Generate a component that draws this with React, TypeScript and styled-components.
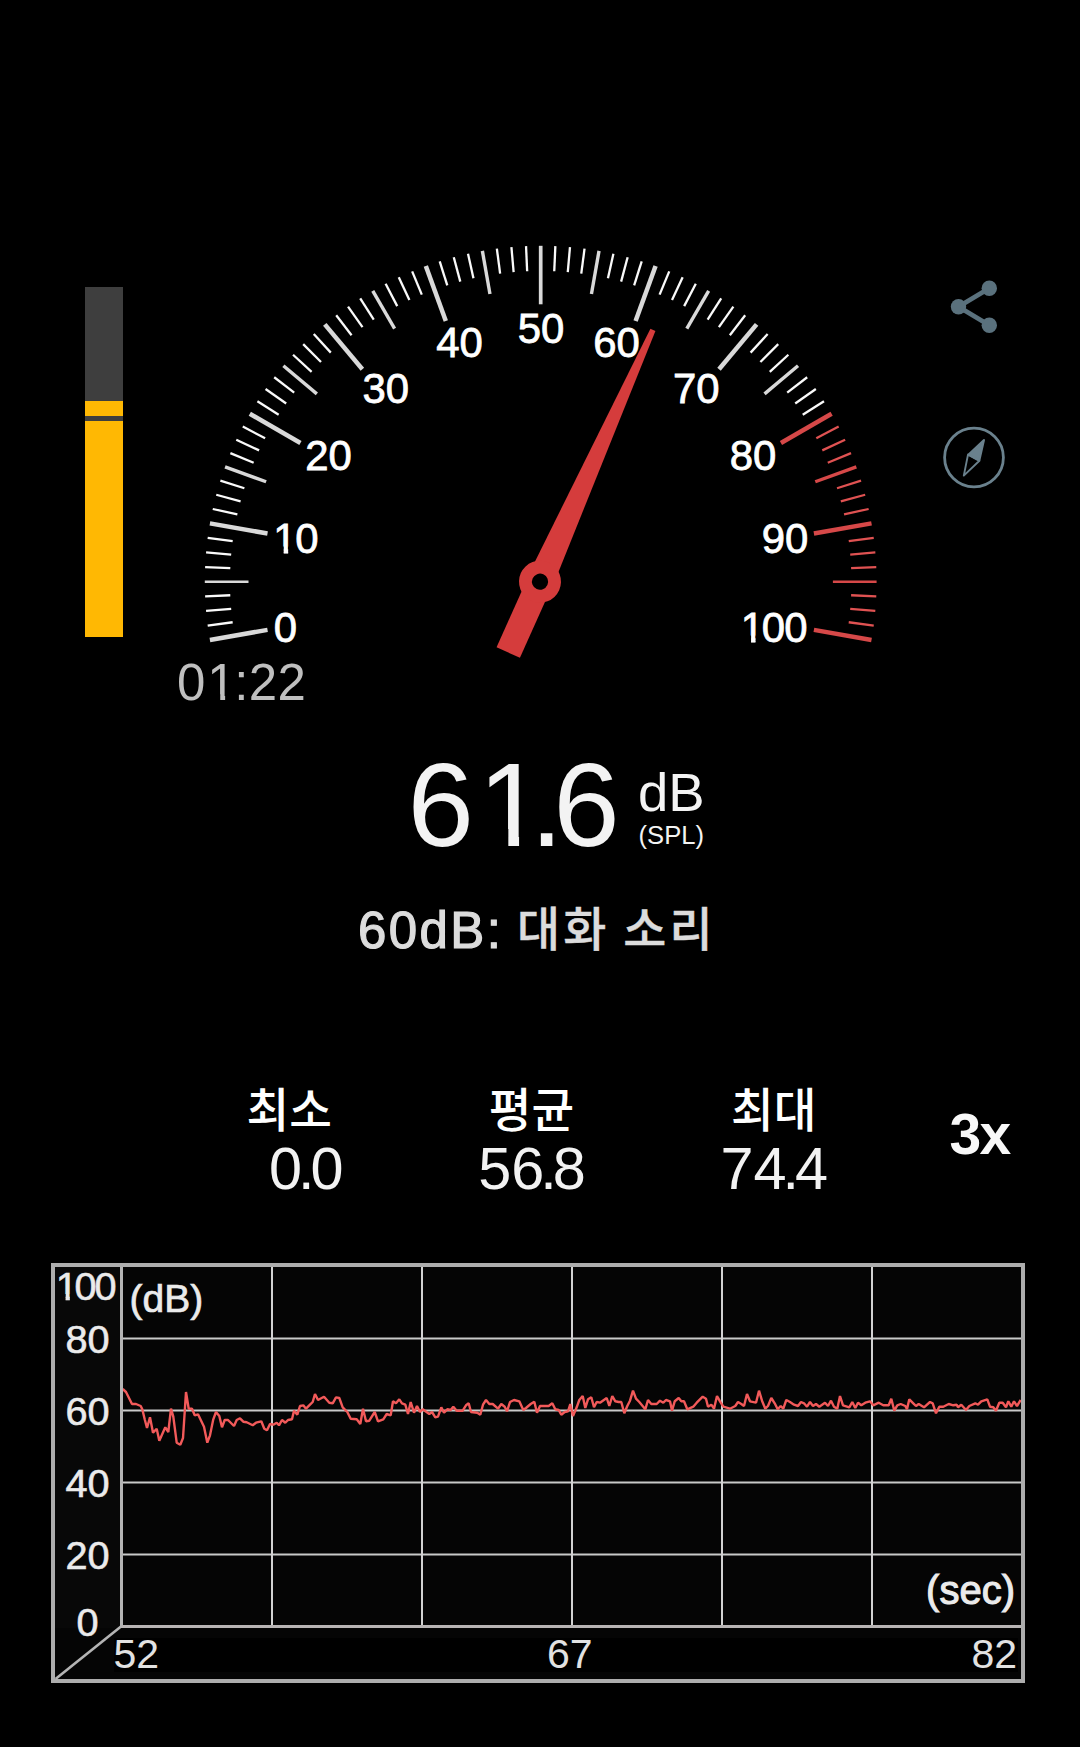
import React from 'react';
import styled, { createGlobalStyle } from 'styled-components';

const LATIN = '"Liberation Sans", Arial, "Noto Sans CJK KR", sans-serif';
const HANGUL = '"Noto Sans CJK KR", "Liberation Sans", sans-serif';

const GlobalStyle = createGlobalStyle`
  html, body { margin: 0; padding: 0; background: #000; }
  body { font-family: ${LATIN}; color: #fff; }
`;

const Screen = styled.main`
  box-sizing: border-box;
  width: 1080px;
  height: 1747px;
  padding-top: 245px;
  background: #000;
  display: flex;
  flex-direction: column;
  overflow: hidden;
`;

/* ---------- numerals ---------- */

/* A plain "1": the foot serif is clipped off and the stem nudged right. */
const One = styled.span<{ $left: number; $right: number }>`
  display: inline-block;
  transform: translateX(0.033em);
  clip-path: polygon(
    0 0, 0.6em 0, 0.6em 70%,
    ${(p) => p.$right}em 70%, ${(p) => p.$right}em 100%,
    ${(p) => p.$left}em 100%, ${(p) => p.$left}em 70%, 0 70%
  );
`;

const Tuck = styled.span<{ $by: number }>`
  letter-spacing: ${(p) => p.$by}em;
`;

type DigitsProps = { text: string; before?: number; after?: number; bleed?: number };

function Digits({ text, before = -0.066, after = -0.068, bleed = 0 }: DigitsProps) {
  return (
    <>
      {text.split('').map((c, i) => {
        const glyph = c === '1' ? <One $left={0.2545 - bleed * 0.5} $right={0.3445 + bleed}>1</One> : c;
        if (c === '.') return <Tuck key={i} $by={after}>.</Tuck>;
        if (text[i + 1] === '.') return <Tuck key={i} $by={before}>{glyph}</Tuck>;
        return <React.Fragment key={i}>{glyph}</React.Fragment>;
      })}
    </>
  );
}

/* ---------- top row ---------- */

const TopRow = styled.section`
  display: flex;
  align-items: flex-start;
  height: 409px;
  padding-left: 85px;
`;

const Level = styled.div`
  display: flex;
  flex-direction: column;
  width: 38px;
  height: 350px;
  margin: 42px 77px 0 0;
  background: #3e3e3e;
`;

const LevelPart = styled.div<{ $height: number; $filled?: boolean }>`
  height: ${(p) => p.$height}px;
  background: ${(p) => (p.$filled ? '#ffb803' : '#3e3e3e')};
`;

const DialBox = styled.div`
  position: relative;
  width: 680px;
  height: 409px;
`;

const DialLabel = styled.span<{ $x: number; $y: number; $tight: boolean }>`
  position: absolute;
  left: ${(p) => p.$x - 200}px;
  top: ${(p) => p.$y - 245 - 34.2}px;
  transform: translateX(-50%);
  font-size: 41.9px;
  line-height: 40px;
  letter-spacing: ${(p) => (p.$tight ? -0.8 : 0)}px;
  white-space: nowrap;
  -webkit-text-stroke: 0.8px #fff;
`;

const DialDrawing = styled.svg`
  position: absolute;
  inset: 0;
  overflow: visible;
`;

const Actions = styled.div`
  display: flex;
  flex-direction: column;
  align-items: center;
  gap: 88px;
  width: 80px;
  margin: 32px 0 0 54px;
`;

const IconButton = styled.button`
  display: block;
  padding: 0;
  border: 0;
  background: none;

  svg { display: block; }
`;

const CX = 540;
const CY = 581.7;

const labels: [string, number, number][] = [
  ['0', 285.3, 641.7],
  ['10', 295.2, 552.7],
  ['20', 328.5, 470.5],
  ['30', 385.7, 402.7],
  ['40', 459.6, 357.6],
  ['50', 541, 343],
  ['60', 616.5, 357.6],
  ['70', 696.2, 402.7],
  ['80', 753, 470],
  ['90', 785, 552.7],
  ['100', 773, 641.7],
];

function Ticks() {
  return (
    <>
      {Array.from({ length: 81 }, (_, i) => {
        const a = ((-10 + i * 2.5) * Math.PI) / 180;
        const major = i % 8 === 0;
        const medium = !major && i % 4 === 0;
        const len = major ? 58.5 : medium ? 43.7 : 25.2;
        const flat = i === 4 || i === 76;
        const width = major ? (i === 40 ? 3.7 : 4.5) : medium ? (flat ? 2.4 : 3.4) : 2.3;
        const red = i >= 64;
        const color = red ? (major || medium ? '#d64848' : '#e05252') : major || medium ? '#d9d9d9' : '#fafafa';
        const r1 = 335.9;
        const r0 = r1 - len;
        return (
          <line
            key={i}
            x1={CX - r1 * Math.cos(a)}
            y1={CY - r1 * Math.sin(a)}
            x2={CX - r0 * Math.cos(a)}
            y2={CY - r0 * Math.sin(a)}
            stroke={color}
            strokeWidth={width}
          />
        );
      })}
    </>
  );
}

function Dial() {
  return (
    <DialBox>
      {labels.map(([t, x, y]) => (
        <DialLabel key={t} $x={x} $y={y} $tight={t.length > 2}>
          <Digits text={t} bleed={0.011} />
        </DialLabel>
      ))}
      <DialDrawing width="680" height="409" viewBox="200 245 680 409">
        <g transform="translate(0.7 0)">
          <Ticks />
        </g>
        <g transform={`translate(${CX} ${CY}) rotate(24.15)`} fill="#d53c3c">
          <path d="M-2.75 -276H2.75L12.8 -17V77.6H-12.8V-17Z" />
          <circle r="21" />
          <circle r="8.1" fill="#000" />
        </g>
      </DialDrawing>
    </DialBox>
  );
}

function ShareIcon() {
  return (
    <svg width="60" height="60" viewBox="944 277 60 60" fill="#5a717d">
      <path d="M989.3 288.3L958.5 306.7L989.3 325.3" fill="none" stroke="#5a717d" strokeWidth="4.8" />
      <circle cx="989.3" cy="288.3" r="7.7" />
      <circle cx="958.5" cy="306.7" r="7.7" />
      <circle cx="989.3" cy="325.3" r="7.7" />
    </svg>
  );
}

function CompassIcon() {
  return (
    <svg width="64" height="64" viewBox="942 425 64 64" fill="none" stroke="#6a818d">
      <circle cx="974" cy="457.5" r="29.4" strokeWidth="2.8" />
      <path d="M984 440L968.6 454.6L979.4 460.4Z" fill="#6a818d" strokeWidth="2" strokeLinejoin="round" />
      <path d="M968 454.6L963.8 475.6L979.4 460.8Z" strokeWidth="1.9" strokeLinejoin="round" />
    </svg>
  );
}

/* ---------- readings ---------- */

const Timer = styled.time`
  margin: 1px 0 0 177px;
  font-size: 51px;
  line-height: 56px;
  letter-spacing: 0.3px;
  color: #bfbfbf;
`;

const Reading = styled.section`
  display: flex;
  height: 120px;
  margin-top: 34px;
  padding-left: 407.5px;
  color: #f3f3f3;
`;

const ReadingValue = styled.strong`
  width: 230.5px;
  font-weight: 400;
  font-size: 119.5px;
  line-height: 120px;
  white-space: nowrap;
`;

const Units = styled.div`
  display: flex;
  flex-direction: column;
  padding-top: 19.6px;
`;

const Unit = styled.span`
  font-size: 54.5px;
  line-height: 56px;
`;

const UnitNote = styled.small`
  margin-top: -1px;
  padding-left: 0.6px;
  font-size: 25.6px;
  line-height: 30px;
  white-space: nowrap;
`;

const Caption = styled.p`
  display: flex;
  align-items: flex-start;
  height: 70px;
  margin: 26px 0 0 358px;
  color: #dcdcdc;
`;

const CaptionLevel = styled.span`
  width: 159px;
  padding-top: 5px;
  font-size: 51px;
  line-height: 70px;
  letter-spacing: 2.4px;
  -webkit-text-stroke: 1.2px #dcdcdc;
`;

const CaptionText = styled.span`
  font-family: ${HANGUL};
  font-weight: 500;
  font-size: 46.8px;
  line-height: 70px;
  letter-spacing: 3.2px;
  white-space: nowrap;
  -webkit-text-stroke: 0.4px #dcdcdc;
`;

const Stats = styled.section`
  display: flex;
  height: 122px;
  margin-top: 116px;
  padding-left: 233.5px;
`;

const Stat = styled.div`
  display: flex;
  flex-direction: column;
  width: 110px;
  margin-right: 132.3px;
`;

const StatLabel = styled.span`
  padding-left: 13px;
  font-family: ${HANGUL};
  font-weight: 500;
  font-size: 46.4px;
  line-height: 60px;
`;

const StatValue = styled.span`
  align-self: flex-end;
  margin-top: 2.4px;
  font-size: 59.4px;
  line-height: 60px;
  color: #f2f2f2;
`;

const Speed = styled.strong`
  margin: 26.6px 0 0 -11px;
  font-size: 57px;
  line-height: 60px;
  letter-spacing: -1.5px;
  color: #f8f8f8;
`;

/* ---------- history chart ---------- */

const Frame = styled.section`
  box-sizing: border-box;
  display: grid;
  grid-template-columns: 65px 1fr;
  grid-template-rows: 361px 1fr;
  width: 974px;
  height: 420px;
  margin: 64px 0 0 51px;
  border: 4px solid #adadad;
  background: #050505;
`;

const YAxis = styled.div`
  display: flex;
  flex-direction: column;
  align-items: center;
  height: 361px;
  background: #080808;
`;

const YLabel = styled.span<{ $gap: number; $tight?: boolean }>`
  flex: none;
  margin-top: ${(p) => p.$gap}px;
  margin-right: ${(p) => (p.$tight ? 6 : 0)}px;
  font-size: 39.7px;
  line-height: 40px;
  letter-spacing: ${(p) => (p.$tight ? -2 : 0)}px;
  white-space: nowrap;
  color: #ebebeb;
  -webkit-text-stroke: 0.6px #ebebeb;
`;

const Plot = styled.div`
  position: relative;
  box-sizing: border-box;
  display: flex;
  flex-direction: column;
  justify-content: space-between;
  padding: 11.5px 6px 15.5px 6.5px;
  border-left: 3px solid #b4b4b4;
  border-bottom: 3px solid #b8b4b4;
`;

const PlotDrawing = styled.svg`
  position: absolute;
  inset: 0;
`;

const AxisName = styled.span<{ $end?: boolean }>`
  position: relative;
  align-self: ${(p) => (p.$end ? 'flex-end' : 'flex-start')};
  font-size: ${(p) => (p.$end ? 40 : 39)}px;
  line-height: 40px;
  color: #ebebeb;
  -webkit-text-stroke: ${(p) => (p.$end ? 1.1 : 0.7)}px #ebebeb;
`;

const Corner = styled.svg`
  display: block;
`;

const XAxis = styled.div`
  display: flex;
  justify-content: space-between;
  align-items: flex-start;
  height: 34px;
  margin: 10px 3px 0 -6px;
  background: #000;
`;

const XLabel = styled.span<{ $left?: number; $right?: number }>`
  margin: -4px ${(p) => p.$right ?? 0}px 0 ${(p) => p.$left ?? 0}px;
  font-size: 41px;
  line-height: 40px;
  color: #e2e2e2;
`;

/* Samples in thirds of a pixel, one group per stretch of the recording. */
const history: [number, string][] = [
  [110, '38,57;48,66;66,102;78,102;92,108;97,118;104,148;111,174;120,142;129,188;140,176;148,212;157,192;166,172;175,186;183,116;190,140;200,218;211,224;219,204;228,66;236,116;246,116;254,136;264,133;282,170;292,218;300,196;310,148;318,126;328,138;336,172;344,150;354,150;372,168;380,150;390,145;400,155;410,157;428,166;438,158;454,154;463,176;471,181;480,162;490,164;500,158;507,166;516,150;526,158;534,150;546,148;552,122;562,134;570,108;580,106;588,116;600,104;608,96;615,72;624,90;642,80;658,98;668,100;678,82;688,84;698,112;712,126;722,146;740,148;751,162;759,116;768,154;778,152;794,126;804,154;820,148;830,132;842,136;849,94;858,100;868,88;876,100;886,104;894,132'],
  [410, '2,96;12,128;21,108;30,126;38,118;58,132;66,126;76,142;84,140;94,112;102,128;112,118;122,120;130,110;140,122;158,122;168,106;176,100;183,126;202,128;211,134;219,104;228,90;238,102;248,102;264,116;274,102;284,110;291,124;300,96;312,90;328,94;340,120;348,114;362,102;373,95;381,128;390,108;416,108;427,100;436,118;446,120;454,134;464,126;474,124;481,102;489,138;500,112;508,90;518,78;526,114;534,88;544,82;552,112;560,96;570,98;590,84;598,108;607,78;616,94;626,96;634,96;643,130;652,108;660,92;669,62;678,86;688,96;706,118;714,90;724,102;740,102;750,92;760,98;768,90;780,94;786,122;794,94;806,84;814,94;822,94;832,118;850,110;860,98;878,80;888,86;894,110'],
  [710, '4,104;12,116;21,78;30,94;40,110;60,116;76,108;84,96;94,102;102,108;111,72;120,94;138,98;147,62;156,92;166,116;174,108;184,84;194,100;203,118;212,108;220,116;229,90;240,96;252,104;264,108;273,96;282,100;291,110;300,96;309,108;318,102;328,110;345,98;354,108;363,92;372,110;382,116;390,78;399,106;418,112;427,96;436,114;444,98;454,106;466,98;480,94;490,106;506,98;520,106;536,106;544,86;553,122;562,106;572,102;586,108;591,118;598,88;610,100;618,108;626,102;642,112;660,96;668,100;678,130;688,110;700,110;716,102;730,106;740,104;744,112;754,104;768,120;778,108;796,100;804,104;814,94;832,88;840,110;850,112;858,122;868,98;878,98;888,112;895,94;904,110;912,94;921,108;932,90'],
];

const linePoints = history
  .map(([x0, run]) =>
    run
      .split(';')
      .map((s) => {
        const [x, y] = s.split(',').map(Number);
        return `${(x0 + x / 3).toFixed(1)},${(1370 + y / 3).toFixed(1)}`;
      })
      .join(' ')
  )
  .join(' ');

function HistoryChart() {
  return (
    <Frame>
      <YAxis>
        <YLabel $gap={-1} $tight><Digits text="100" bleed={0.011} /></YLabel>
        <YLabel $gap={12.6}>80</YLabel>
        <YLabel $gap={32}>60</YLabel>
        <YLabel $gap={32}>40</YLabel>
        <YLabel $gap={32}>20</YLabel>
        <YLabel $gap={27.6}>0</YLabel>
      </YAxis>
      <Plot>
        <PlotDrawing width="898" height="358" viewBox="123 1267 898 358">
          <g stroke="#c9cac9" strokeWidth="2">
            {[1338.4, 1410.4, 1482.4, 1554.4].map((y) => (
              <line key={y} x1="123" x2="1021" y1={y} y2={y} />
            ))}
          </g>
          <g stroke="#d2d2d2" strokeWidth="2">
            {[272, 422, 572, 722, 872].map((x) => (
              <line key={x} x1={x} x2={x} y1="1267" y2="1625" />
            ))}
          </g>
          <polyline points={linePoints} fill="none" stroke="#f25a5a" strokeWidth="2.4" strokeLinejoin="bevel" />
        </PlotDrawing>
        <AxisName>(dB)</AxisName>
        <AxisName $end>(sec)</AxisName>
      </Plot>
      <Corner width="65" height="51" viewBox="55 1628 65 51" overflow="visible">
        <path d="M55.5 1679L121 1626.5" stroke="#b4b4b4" strokeWidth="2.6" />
      </Corner>
      <XAxis>
        <XLabel $left={-0.6}>52</XLabel>
        <XLabel $left={9}>67</XLabel>
        <XLabel $right={1}>82</XLabel>
      </XAxis>
    </Frame>
  );
}

export default function App() {
  return (
    <Screen>
      <GlobalStyle />
      <TopRow>
        <Level>
          <LevelPart $height={114} />
          <LevelPart $height={15} $filled />
          <LevelPart $height={5} />
          <LevelPart $height={216} $filled />
        </Level>
        <Dial />
        <Actions>
          <IconButton aria-label="share"><ShareIcon /></IconButton>
          <IconButton aria-label="compass"><CompassIcon /></IconButton>
        </Actions>
      </TopRow>
      <Timer><Digits text="01:22" bleed={0.004} /></Timer>
      <Reading>
        <ReadingValue><Digits text="61.6" before={-0.087} after={-0.084} /></ReadingValue>
        <Units>
          <Unit>dB</Unit>
          <UnitNote>(SPL)</UnitNote>
        </Units>
      </Reading>
      <Caption>
        <CaptionLevel>60dB:</CaptionLevel>
        <CaptionText>대화 소리</CaptionText>
      </Caption>
      <Stats>
        <Stat>
          <StatLabel>최소</StatLabel>
          <StatValue><Digits text="0.0" /></StatValue>
        </Stat>
        <Stat>
          <StatLabel>평균</StatLabel>
          <StatValue><Digits text="56.8" /></StatValue>
        </Stat>
        <Stat>
          <StatLabel>최대</StatLabel>
          <StatValue><Digits text="74.4" /></StatValue>
        </Stat>
        <Speed>3x</Speed>
      </Stats>
      <HistoryChart />
    </Screen>
  );
}
